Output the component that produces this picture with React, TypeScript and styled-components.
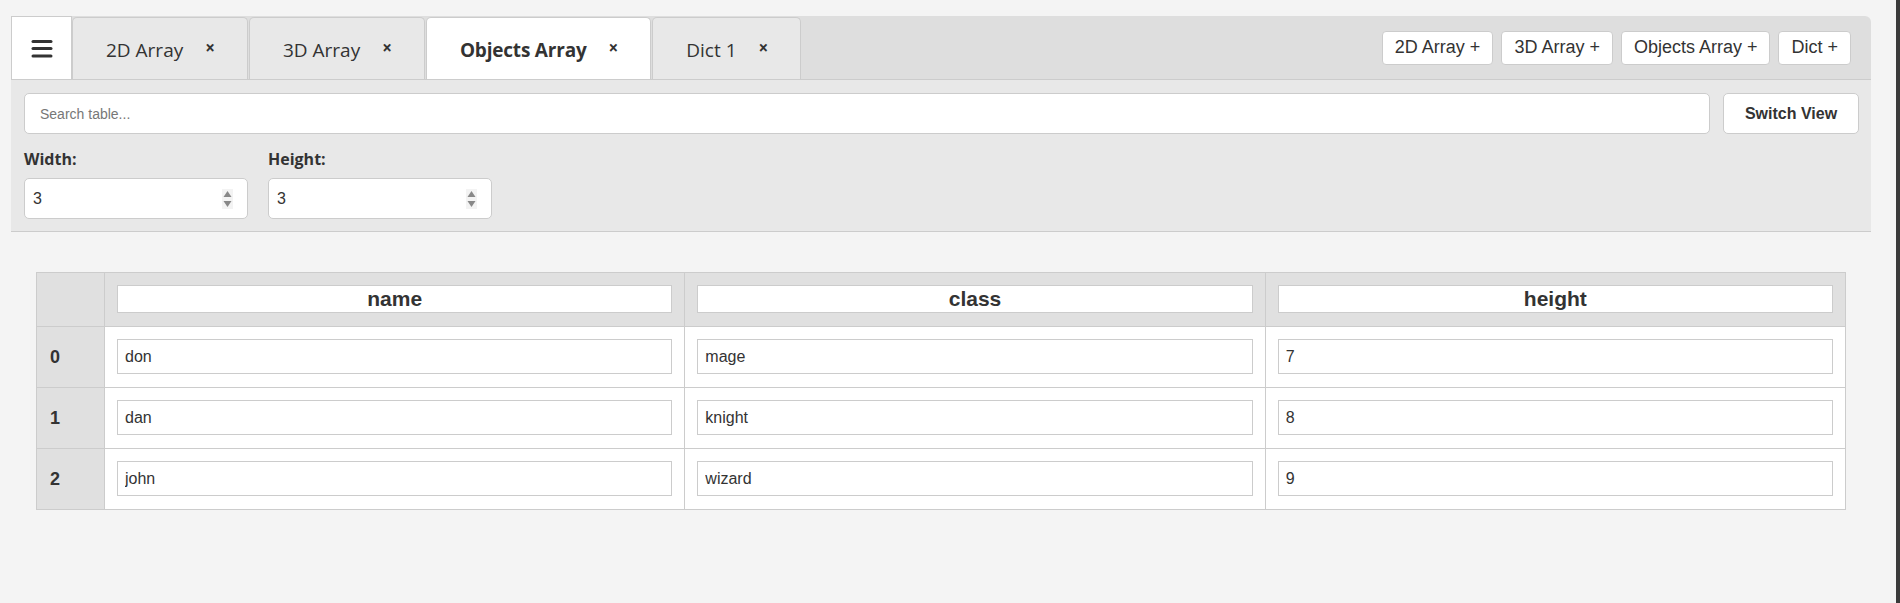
import React from "react";
import styled, { createGlobalStyle } from "styled-components";

const GlobalStyle = createGlobalStyle`
  html, body { margin: 0; padding: 0; background: #f4f4f4; }
  body { font-family: "Open Sans", "Liberation Sans", sans-serif; color: #333; }
  * { box-sizing: border-box; }
`;

const Page = styled.div`
  display: flex;
  min-height: 603px;
`;

const Main = styled.div`
  flex: 1;
  min-width: 0;
  padding: 16px 25px 0 11px;
`;

const WindowEdge = styled.div`
  width: 4px;
  background: #3a3a3a;
`;

const TabBar = styled.div`
  display: flex;
  align-items: flex-end;
  height: 64px;
  background: #dedede;
  border-bottom: 1px solid #ccc;
  border-top-right-radius: 6px;
`;

const MenuButton = styled.button`
  align-self: stretch;
  width: 61px;
  display: flex;
  align-items: center;
  justify-content: center;
  background: #fff;
  border: 1px solid #ccc;
  border-bottom: none;
  padding: 0;
  cursor: pointer;
`;

const Tab = styled.div<{ $active?: boolean }>`
  height: 62px;
  display: flex;
  align-items: center;
  gap: 22px;
  padding: 3px 32px 0 33px;
  margin-right: 1px;
  background: ${(p) => (p.$active ? "#fff" : "#e8e8e8")};
  border: 1px solid #ccc;
  border-bottom: none;
  border-radius: 5px 5px 0 0;
  font-size: 19px;
  font-weight: ${(p) => (p.$active ? 700 : 400)};
  letter-spacing: ${(p) => (p.$active ? "-0.2px" : "0")};
  color: #333;
  white-space: nowrap;
`;

const TabClose = styled.span`
  font-family: "Open Sans", sans-serif;
  font-size: 17px;
  font-weight: 700;
  line-height: 1;
  letter-spacing: 0;
  margin-top: -5px;
  color: #333;
`;

const AddGroup = styled.div`
  margin-left: auto;
  align-self: center;
  display: flex;
  gap: 8px;
  padding-right: 20px;
`;

const AddButton = styled.button`
  height: 34px;
  padding: 0 12px;
  background: #fff;
  border: 1px solid #ccc;
  border-radius: 4px;
  font-family: "Liberation Sans", Arial, sans-serif;
  font-size: 18px;
  color: #333;
  cursor: pointer;
`;

const Toolbar = styled.div`
  background: #e8e8e8;
  border-bottom: 1px solid #ccc;
  padding: 13px 12px 12px 13px;
`;

const SearchRow = styled.div`
  display: flex;
  gap: 13px;
`;

const SearchInput = styled.input`
  flex: 1;
  height: 41px;
  padding: 0 15px;
  border: 1px solid #ccc;
  border-radius: 5px;
  background: #fff;
  font-family: "Liberation Sans", Arial, sans-serif;
  font-size: 14px;
  color: #333;
  outline: none;
  &::placeholder { color: #777; }
`;

const SwitchButton = styled.button`
  width: 136px;
  height: 41px;
  background: #fff;
  border: 1px solid #ccc;
  border-radius: 5px;
  font-family: "Liberation Sans", Arial, sans-serif;
  font-weight: 700;
  font-size: 16px;
  color: #333;
  cursor: pointer;
`;

const SizeRow = styled.div`
  display: flex;
  gap: 20px;
  margin-top: 14px;
`;

const Field = styled.label`
  display: flex;
  flex-direction: column;
  gap: 8px;
`;

const FieldLabel = styled.span`
  font-size: 16px;
  font-weight: 700;
  line-height: 22px;
  color: #333;
`;

const NumberBox = styled.div`
  width: 224px;
  height: 41px;
  display: flex;
  align-items: center;
  background: #fff;
  border: 1px solid #ccc;
  border-radius: 5px;
  padding: 0 14px 0 8px;
`;

const NumberInput = styled.input`
  flex: 1;
  min-width: 0;
  border: none;
  outline: none;
  background: transparent;
  padding: 0;
  font-family: "Liberation Sans", Arial, sans-serif;
  font-size: 16px;
  color: #333;
  -moz-appearance: textfield;
  &::-webkit-inner-spin-button,
  &::-webkit-outer-spin-button { -webkit-appearance: none; margin: 0; }
`;

const Spinner = () => (
  <svg width="11" height="20" viewBox="0 0 11 20" aria-hidden="true">
    <rect x="0" y="0" width="11" height="20" fill="#f3f3f3" />
    <path d="M5.5 2 L9.5 8 L1.5 8 Z" fill="#888" />
    <path d="M5.5 18 L9.5 12 L1.5 12 Z" fill="#888" />
  </svg>
);

const Table = styled.table`
  width: calc(100% - 50px);
  margin: 40px 25px 0;
  border-collapse: collapse;
  table-layout: fixed;
  font-family: "Liberation Sans", Arial, sans-serif;
`;

const HeadCell = styled.th`
  background: #e0e0e0;
  border: 1px solid #ccc;
  padding: 12px 12px 13px;
`;

const IndexCell = styled.th`
  background: #e0e0e0;
  border: 1px solid #ccc;
  padding: 0 13px;
  text-align: left;
  font-size: 18px;
  font-weight: 700;
  color: #333;
`;

const DataCell = styled.td`
  background: #fff;
  border: 1px solid #ccc;
  padding: 12px 12px 13px;
`;

const HeaderInput = styled.input`
  display: block;
  width: 100%;
  height: 28px;
  border: 1px solid #ccc;
  background: #fff;
  text-align: center;
  font-family: "Liberation Sans", Arial, sans-serif;
  font-size: 21px;
  font-weight: 700;
  color: #333;
  padding: 0;
  outline: none;
`;

const CellInput = styled.input`
  display: block;
  width: 100%;
  height: 35px;
  border: 1px solid #ccc;
  background: #fff;
  padding: 0 7px;
  font-family: "Liberation Sans", Arial, sans-serif;
  font-size: 16px;
  color: #333;
  outline: none;
`;

const Hamburger = () => (
  <svg width="22" height="20" viewBox="0 0 22 20" aria-hidden="true">
    <rect x="0.5" y="2" width="21" height="3" rx="1.5" fill="#333" />
    <rect x="0.5" y="9" width="21" height="3" rx="1.5" fill="#333" />
    <rect x="0.5" y="16.5" width="21" height="3" rx="1.5" fill="#333" />
  </svg>
);

const tabs = [
  { label: "2D Array", active: false },
  { label: "3D Array", active: false },
  { label: "Objects Array", active: true },
  { label: "Dict 1", active: false },
];

const addButtons = ["2D Array +", "3D Array +", "Objects Array +", "Dict +"];

const columns = ["name", "class", "height"];
const rows = [
  ["don", "mage", "7"],
  ["dan", "knight", "8"],
  ["john", "wizard", "9"],
];

export default function App() {
  return (
    <Page>
      <GlobalStyle />
      <Main>
        <TabBar>
          <MenuButton aria-label="Menu">
            <Hamburger />
          </MenuButton>
          {tabs.map((t) => (
            <Tab key={t.label} $active={t.active}>
              <span>{t.label}</span>
              <TabClose>×</TabClose>
            </Tab>
          ))}
          <AddGroup>
            {addButtons.map((b) => (
              <AddButton key={b}>{b}</AddButton>
            ))}
          </AddGroup>
        </TabBar>
        <Toolbar>
          <SearchRow>
            <SearchInput placeholder="Search table..." />
            <SwitchButton>Switch View</SwitchButton>
          </SearchRow>
          <SizeRow>
            <Field>
              <FieldLabel>Width:</FieldLabel>
              <NumberBox>
                <NumberInput type="number" defaultValue={3} />
                <Spinner />
              </NumberBox>
            </Field>
            <Field>
              <FieldLabel>Height:</FieldLabel>
              <NumberBox>
                <NumberInput type="number" defaultValue={3} />
                <Spinner />
              </NumberBox>
            </Field>
          </SizeRow>
        </Toolbar>
        <Table>
          <colgroup>
            <col style={{ width: 68 }} />
            <col />
            <col />
            <col />
          </colgroup>
          <thead>
            <tr>
              <IndexCell />
              {columns.map((c) => (
                <HeadCell key={c}>
                  <HeaderInput defaultValue={c} />
                </HeadCell>
              ))}
            </tr>
          </thead>
          <tbody>
            {rows.map((r, i) => (
              <tr key={i}>
                <IndexCell>{i}</IndexCell>
                {r.map((v, j) => (
                  <DataCell key={j}>
                    <CellInput defaultValue={v} />
                  </DataCell>
                ))}
              </tr>
            ))}
          </tbody>
        </Table>
      </Main>
      <WindowEdge />
    </Page>
  );
}
